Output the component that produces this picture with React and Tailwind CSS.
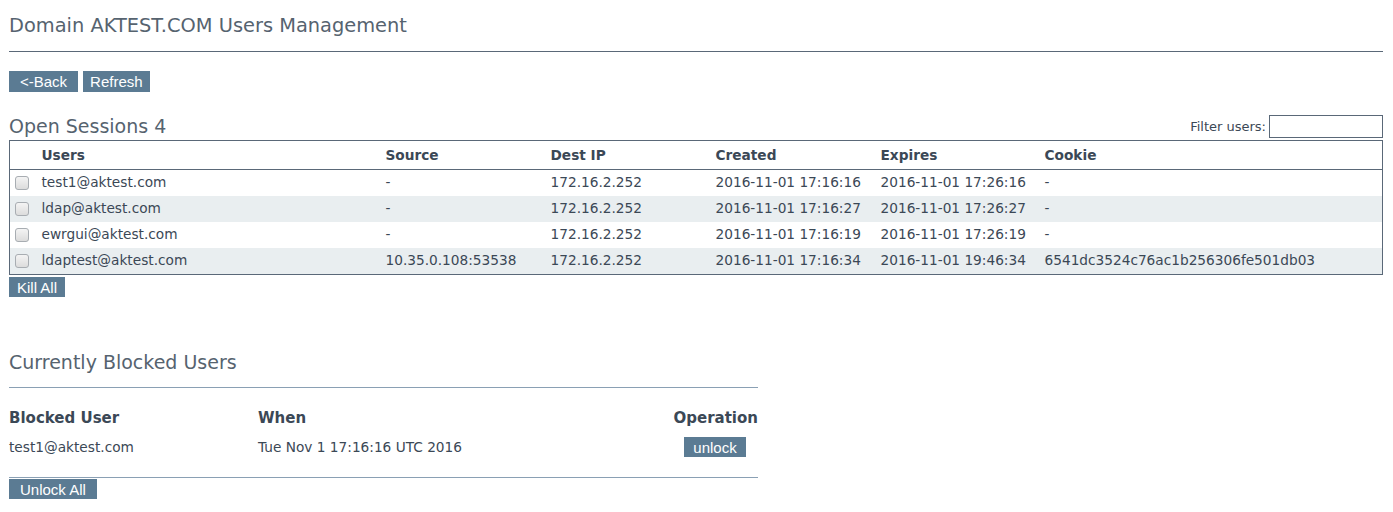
import React, { useState } from 'react';

const sessions = [
    { user: 'test1@aktest.com', source: '-', dest: '172.16.2.252', created: '2016-11-01 17:16:16', expires: '2016-11-01 17:26:16', cookie: '-' },
    { user: 'ldap@aktest.com', source: '-', dest: '172.16.2.252', created: '2016-11-01 17:16:27', expires: '2016-11-01 17:26:27', cookie: '-' },
    { user: 'ewrgui@aktest.com', source: '-', dest: '172.16.2.252', created: '2016-11-01 17:16:19', expires: '2016-11-01 17:26:19', cookie: '-' },
    { user: 'ldaptest@aktest.com', source: '10.35.0.108:53538', dest: '172.16.2.252', created: '2016-11-01 17:16:34', expires: '2016-11-01 19:46:34', cookie: '6541dc3524c76ac1b256306fe501db03' },
];

const Btn = ({ children, className = '' }) => (
    <button className={`bg-[#5b7b93] text-white text-[15px] leading-none font-['Liberation_Sans',sans-serif] ${className}`}>
        {children}
    </button>
);

const App = () => {
    const [filter, setFilter] = useState('');

    return (
        <div className="font-['DejaVu_Sans',sans-serif] text-[#3b4856] bg-white min-h-[512px] pl-[9px] pr-[10px]">
            {/* Page header */}
            <h1 className="text-[19.4px] font-normal text-[#56636f] pt-[17px] leading-[18px]">Domain AKTEST.COM Users Management</h1>
            <div className="h-px bg-[#5a6878] mt-[16px]" />

            <div className="flex gap-[5px] mt-[19px]">
                <Btn className="h-[21px] px-[11px]">&lt;-Back</Btn>
                <Btn className="h-[21px] px-[7px]">Refresh</Btn>
            </div>

            {/* Open sessions */}
            <div className="flex items-end justify-between mt-[23px]">
                <h2 className="text-[19px] font-normal text-[#56636f] leading-none pb-[2px]">Open Sessions 4</h2>
                <label className="flex items-center gap-[3px] text-[13px]">
                    Filter users:
                    <input value={filter} onChange={e => setFilter(e.target.value)}
                        className="w-[114px] h-[23px] border border-[#5a6878] outline-none px-1" />
                </label>
            </div>

            <table className="w-full border border-[#5a6878] border-collapse text-[13.7px] mt-[2px]">
                <thead>
                    <tr className="h-[29px] border-b border-[#5a6878] text-left">
                        <th className="w-[32px]"></th>
                        <th className="font-semibold w-[344px]">Users</th>
                        <th className="font-semibold w-[165px]">Source</th>
                        <th className="font-semibold w-[165px]">Dest IP</th>
                        <th className="font-semibold w-[165px]">Created</th>
                        <th className="font-semibold w-[164px]">Expires</th>
                        <th className="font-semibold">Cookie</th>
                    </tr>
                </thead>
                <tbody>
                    {sessions.filter(s => s.user.includes(filter)).map((s, i) => (
                        <tr key={s.user} className={`${i === 3 ? 'h-[27px]' : 'h-[26px]'} ${i % 2 ? 'bg-[#e9eef0]' : 'bg-white'}`}>
                            <td className="pl-[5px]">
                                <div className="w-[14px] h-[14px] rounded-[3px] border border-[#a8adb2] bg-gradient-to-b from-[#f4f4f4] to-[#dcdcdc]" />
                            </td>
                            <td>{s.user}</td>
                            <td>{s.source}</td>
                            <td>{s.dest}</td>
                            <td>{s.created}</td>
                            <td>{s.expires}</td>
                            <td>{s.cookie}</td>
                        </tr>
                    ))}
                </tbody>
            </table>
            <Btn className="mt-[2px] h-[20px] px-[8px]">Kill All</Btn>

            {/* Blocked users */}
            <div className="w-[749px] mt-[53px]">
                <h2 className="text-[19px] font-normal text-[#56636f] leading-none">Currently Blocked Users</h2>
                <div className="h-px bg-[#8aa0b4] mt-[15px]" />
                <div className="grid grid-cols-[249px_1fr_auto] items-center text-[15px] font-semibold mt-[19px]">
                    <div>Blocked User</div>
                    <div>When</div>
                    <div>Operation</div>
                </div>
                <div className="grid grid-cols-[249px_1fr_auto] items-center text-[13.7px] mt-[8px]">
                    <div>test1@aktest.com</div>
                    <div>Tue Nov 1 17:16:16 UTC 2016</div>
                    <div className="w-[86px] flex justify-center"><Btn className="h-[20px] px-[9px]">unlock</Btn></div>
                </div>
                <div className="h-px bg-[#8aa0b4] mt-[19px]" />
                <Btn className="mt-px h-[20px] px-[11px]">Unlock All</Btn>
            </div>
        </div>
    );
};

export default App;
